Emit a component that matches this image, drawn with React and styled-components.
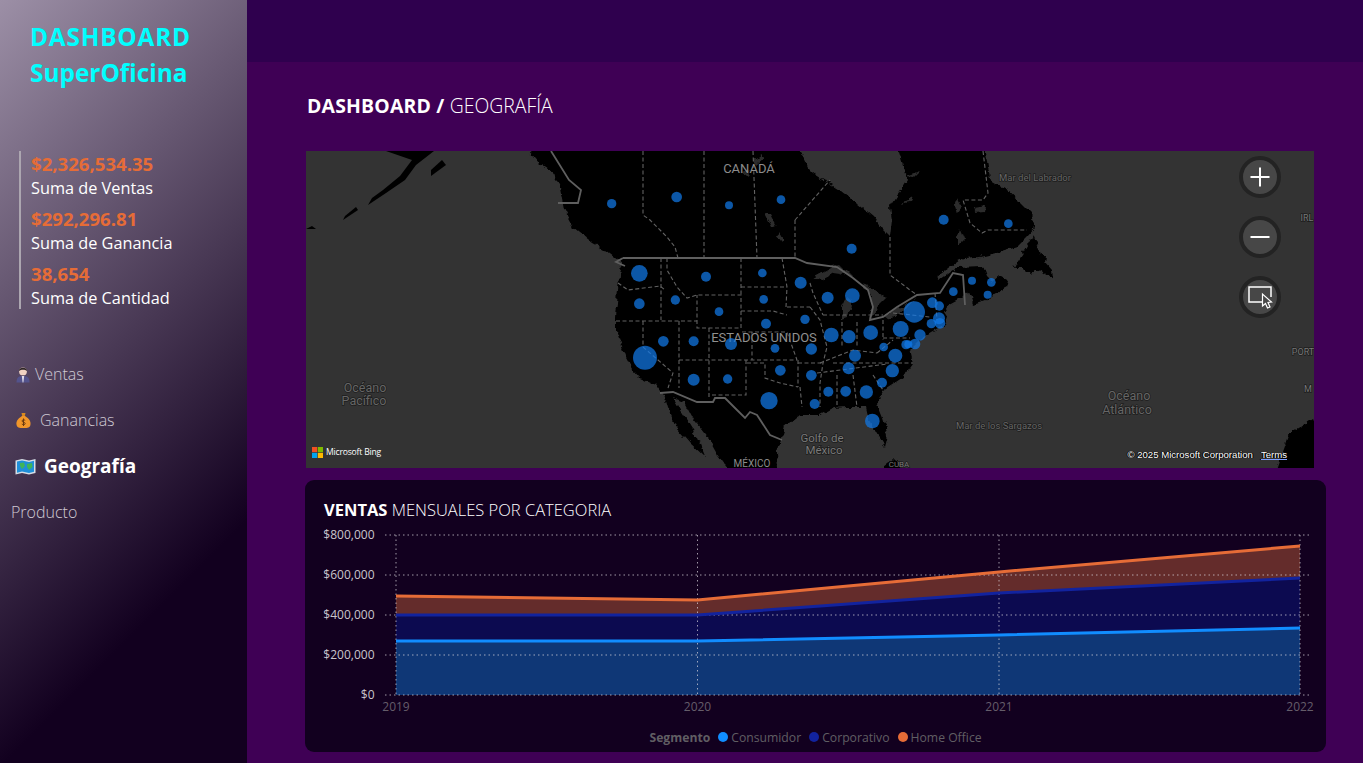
import React from "react";
import styled, { createGlobalStyle } from "styled-components";

const GlobalStyle = createGlobalStyle`
  html, body {
    margin: 0;
    padding: 0;
    background: #3f0055;
    font-family: "Open Sans", "Noto Sans", sans-serif;
  }
`;

const colors = {
  blue: "#118dff",
  navy: "#12239e",
  orange: "#e66c37",
};

const kpis = [
  { value: "$2,326,534.35", label: "Suma de Ventas" },
  { value: "$292,296.81", label: "Suma de Ganancia" },
  { value: "38,654", label: "Suma de Cantidad" },
];

// bubble positions read off the 3x crops: [x, y, r] in crop px
const bubbles = [
  [170, 141, 16], [327, 166, 12], [483, 149, 13], [695, 296, 15], [971, 209, 15], [1165, 221, 13],
  [58, 370, 25], [258, 380, 15], [427, 369, 13], [542, 398, 18], [623, 443, 18], [697, 437, 22],
  [937, 458, 16], [958, 468, 14], [883, 486, 32], [1000, 425, 13], [1056, 392, 12], [1114, 397, 13],
  [1103, 434, 12], [58, 461, 16], [166, 450, 14], [297, 485, 13], [431, 448, 13], [438, 521, 15],
  [555, 508, 14], [957, 505, 18], [934, 521, 14], [960, 520, 16], [842, 537, 24], [752, 548, 22],
  [634, 555, 22], [687, 560, 20], [900, 555, 17], [858, 584, 14], [885, 582, 16], [865, 583, 12],
  [130, 574, 16], [221, 574, 15], [333, 582, 18], [465, 595, 13], [574, 597, 17], [791, 591, 13],
  [705, 617, 18], [826, 617, 21], [75, 623, 36], [686, 655, 18], [817, 662, 20], [481, 661, 16],
  [574, 676, 16], [221, 689, 18], [323, 687, 14], [786, 698, 15], [625, 725, 15], [677, 724, 16],
  [739, 726, 20], [447, 752, 26], [584, 762, 15], [757, 813, 22], [-25, 161, 14],
];

const LAND =
  "M527 145 L529 151 L539 163 L552 172 L559 183 L564 210 L573 227 L584 236 L593 243 L606 250 L623 263 L619 275 L618 290 L616 317 L616 330 L626 357 L633 370 L640 378 L655 385 L660 392 L664 393 L668 407 L677 428 L690 443 L705 457 L697 437 L680 410 L673 398 L685 403 L693 418 L708 437 L717 453 L728 468 L733 476 L776 476 L778 468 L777 453 L782 437 L785 427 L800 415 L820 415 L833 408 L847 407 L866 407 L869 420 L878 436 L885 447 L888 435 L883 418 L877 403 L883 390 L903 377 L913 363 L910 350 L920 340 L931 333 L945 325 L948 318 L944 312 L949 304 L960 298 L969 293 L973 304 L985 300 L1007 288 L1009 280 L1000 275 L992 282 L987 277 L983 266 L957 267 L940 279 L937 277 L960 260 L980 257 L997 253 L1017 247 L1027 237 L1035 228 L1034 216 L1018 200 L1007 190 L990 180 L987 160 L983 145 Z";
const HUDSON = "M797 145 L807 167 L813 173 L840 190 L873 217 L881 228 L890 237 L892 220 L890 207 L907 180 L897 145 Z";
const ISLANDS = [
  "M1033 235 L1026 248 L1017 262 L1014 268 L1024 268 L1030 274 L1040 270 L1046 274 L1053 279 L1052 270 L1045 262 L1046 256 L1040 256 L1037 245 Z",
  "M1320 414 L1290 433 L1284 450 L1275 476 L1320 476 Z",
  "M873 476 L893 460 L910 476 Z",
];
// alaska sits at the map edge, kept out of the rough coast filter
const ALASKA = [
  "M386 151 L434 151 L416 165 L405 180 L386 193 L368 205 L372 198 L383 190 L400 176 L412 160 Z",
  "M431 176 L446 165 L442 160 L431 170 Z",
  "M343 220 L358 210 L356 207 L345 216 Z",
  "M306 229 L316 229 L312 226 Z",
];
const LAKES = [
  "M813 278 L833 267 L840 265 L853 278 L840 274 L833 273 L820 280 Z",
  "M842 307 L842 320 L848 318 L852 300 L847 296 Z",
  "M863 283 L887 297 L878 306 L870 320 L872 297 Z",
  "M884 316 L910 303 L917 297 L905 310 L888 319 Z",
  "M765 214 L770 214 L776 226 L772 228 Z",
  "M778 232 L784 240 L781 243 L776 236 Z",
  "M754 160 L762 154 L764 158 L757 164 Z",
  "M743 172 L750 170 L748 176 Z",
  "M955 205 L958 198 L962 206 L957 212 Z",
  "M974 208 L986 206 L985 211 L975 212 Z",
  "M905 176 L920 171 L914 177 Z",
  "M958 236 L960 230 L964 240 L958 246 Z",
  "M900 204 L912 198 L910 202 Z",
];
const BORDERS = [
  "M623 258 H795 L807 263 L837 267 L853 278 L868 290 L873 307 L870 320 L883 317 L897 307 L917 295 L940 293 L953 273 L963 275 L965 305",
  "M623 258 L616 262 L625 266",
  "M558 203 H578 L581 190 L569 180 L551 151",
  "M660 393 L673 392 L697 402 H713 L715 398 H725 L737 410 L745 418 L750 412 L757 415 L770 435 L782 440",
];
const STATES = [
  "M643 151 V215 L650 220 L667 237 L675 247 L678 258",
  "M704 151 V258", "M753 151 L757 258",
  "M795 220 V258", "M795 220 L830 180",
  "M890 237 V275 L910 290 L917 295",
  "M983 151 L988 193 L983 200 H963 L970 223 L982 233 L988 230 H1027",
  "M618 283 L628 290 L660 286 L665 290",
  "M616 321 H697", "M661 258 V320",
  "M667 258 V270 L677 287 L687 298 L697 295 H741 V328 H697 V295",
  "M741 258 V295", "M741 287 H787", "M782 258 L787 287 L786 307",
  "M741 311 H773 L787 315", "M787 307 H810", "M742 332 H787 L797 360",
  "M679 360 H797", "M709 328 V398", "M679 321 V388", "M746 360 V395 H710",
  "M752 332 V360", "M747 363 H765 V378 L780 383 L798 387", "M798 360 V387",
  "M800 387 L802 407", "M643 321 V347 L673 373 L668 388",
  "M810 307 L820 320 L827 347 L823 363 L820 383 L820 407", "M798 363 H823",
  "M817 373 L887 364", "M833 363 H913", "M837 375 V408", "M853 375 L857 407", "M873 375 L883 390",
  "M842 322 V347", "M857 322 V347", "M883 320 V340", "M883 338 H910",
  "M820 363 L853 350 L877 353", "M893 313 L930 317", "M935 293 L937 320",
  "M810 283 L813 293 L823 315", "M823 315 H883", "M877 353 L893 340",
];

const mapLabels = [
  { x: 749, y: 173, size: 13, text: "CANADÁ", tone: "#8c8c8c" },
  { x: 764, y: 342, size: 13, text: "ESTADOS UNIDOS", tone: "#909090" },
  { x: 365, y: 392, size: 12.5, text: "Océano", tone: "#666" },
  { x: 364, y: 405, size: 12.5, text: "Pacífico", tone: "#666" },
  { x: 822, y: 442, size: 11.5, text: "Golfo de", tone: "#7a7a7a" },
  { x: 824, y: 454, size: 11.5, text: "México", tone: "#7a7a7a" },
  { x: 752, y: 467, size: 10, text: "MÉXICO", tone: "#8c8c8c" },
  { x: 1035, y: 181, size: 9.5, text: "Mar del Labrador", tone: "#666" },
  { x: 999, y: 429, size: 9.5, text: "Mar de los Sargazos", tone: "#666" },
  { x: 1129, y: 400, size: 12.5, text: "Océano", tone: "#666" },
  { x: 1127, y: 414, size: 12.5, text: "Atlántico", tone: "#666" },
  { x: 1307, y: 221, size: 9, text: "IRL", tone: "#777" },
  { x: 1303, y: 355, size: 9, text: "PORT", tone: "#777" },
  { x: 1308, y: 392, size: 9, text: "M", tone: "#777" },
  { x: 899, y: 467, size: 8, text: "CUBA", tone: "#777" },
];

const Shell = styled.div`
  display: grid;
  grid-template-columns: 247px 1fr;
  width: 1363px;
  height: 763px;
  overflow: hidden;
  background: #3f0055;
`;

const Sidebar = styled.aside`
  display: flex;
  flex-direction: column;
  background: linear-gradient(135deg, #9c8fa6 0%, #12001f 76%);
  color: #fff;
`;

const Brand = styled.h1`
  margin: 0;
  padding: 19px 0 0 30px;
  font-size: 24.4px;
  line-height: 36px;
  font-weight: 700;
  color: #00ffff;
  span {
    letter-spacing: 0.8px;
  }
`;

const KpiList = styled.div`
  display: flex;
  flex-direction: column;
  margin: 60px 0 0 19px;
  padding-left: 10px;
  height: 158px;
  box-sizing: border-box;
  border-left: 2px solid #aca6b0;
`;

const Kpi = styled.div`
  flex: 0 0 55px;
  padding-top: 1px;
  box-sizing: border-box;
`;

const KpiValue = styled.div`
  font-size: 18.6px;
  line-height: 24px;
  font-weight: 700;
  color: ${colors.orange};
`;

const KpiLabel = styled.div`
  margin-top: 1px;
  font-size: 16.3px;
  line-height: 22px;
  color: #fff;
`;

const Nav = styled.nav`
  display: flex;
  flex-direction: column;
  margin-top: 42px;
`;

const NavItem = styled.div`
  display: flex;
  align-items: center;
  gap: ${(p) => p.$gap || 5}px;
  height: 46px;
  padding-left: ${(p) => p.$indent || 16}px;
  font-size: ${(p) => (p.$active ? 19 : 16)}px;
  font-weight: ${(p) => (p.$active ? 700 : 300)};
  color: ${(p) => (p.$active ? "#fff" : "#cfc9d3")};
  svg {
    flex: none;
  }
`;

const Main = styled.main`
  display: flex;
  flex-direction: column;
`;

const TopStrip = styled.div`
  height: 62px;
  background: #2f004e;
`;

const Content = styled.div`
  display: flex;
  flex-direction: column;
  align-items: flex-start;
  padding: 30px 0 0 58px;
`;

const Crumb = styled.h2`
  margin: 0 0 31px 2px;
  font-size: 19.4px;
  line-height: 28px;
  font-weight: 300;
  color: #fff;
  b {
    font-weight: 700;
    letter-spacing: 0.2px;
  }
`;

const MapPanel = styled.section`
  position: relative;
  width: 1008px;
  height: 317px;
  margin: 0 0 12px 1px;
  background: #333;
  overflow: hidden;
  svg.base {
    display: block;
  }
`;

const MapLabel = styled.text`
  font-family: Roboto, sans-serif;
  text-anchor: middle;
  paint-order: stroke;
  stroke: rgba(0, 0, 0, 0.45);
  stroke-width: 1.5px;
`;

const ZoomControls = styled.div`
  position: absolute;
  top: 5px;
  right: 33px;
  display: flex;
  flex-direction: column;
  gap: 18px;
`;

const ZoomButton = styled.div`
  display: flex;
  align-items: center;
  justify-content: center;
  width: 42px;
  height: 42px;
  box-sizing: border-box;
  border-radius: 50%;
  border: 4px solid #232323;
  background: #474747;
`;

const BingMark = styled.div`
  position: absolute;
  left: 6px;
  bottom: 10px;
  display: flex;
  align-items: center;
  gap: 3px;
  font-family: "Open Sans", sans-serif;
  font-size: 8.6px;
  letter-spacing: -0.2px;
  color: #fff;
`;

const Attribution = styled.div`
  position: absolute;
  right: 27px;
  bottom: 7px;
  display: flex;
  gap: 8px;
  font-family: "Liberation Sans", sans-serif;
  font-size: 9.6px;
  line-height: 12px;
  color: #fff;
  text-shadow: 0 0 1px #000, 1px 0 0 #000, -1px 0 0 #000;
  u {
    text-decoration-color: #7f9fff;
  }
`;

const ChartCard = styled.section`
  width: 1021px;
  height: 272px;
  background: #12001f;
  border-radius: 9px;
`;

const ChartTitle = styled.h3`
  margin: 0;
  padding: 19px 0 0 19px;
  height: 45px;
  box-sizing: border-box;
  font-size: 16.5px;
  line-height: 22px;
  font-weight: 300;
  color: #fff;
  b {
    font-weight: 700;
  }
`;

const ChartSvg = styled.svg`
  display: block;
  font-family: "Open Sans", sans-serif;
  font-size: 12px;
`;

const Legend = styled.div`
  display: flex;
  align-items: center;
  justify-content: center;
  gap: 8px;
  height: 20px;
  margin-top: 2px;
  font-size: 12.2px;
  color: #605e63;
  b {
    font-weight: 700;
  }
`;

const LegendItem = styled.span`
  display: flex;
  align-items: center;
  gap: 3px;
  &::before {
    content: "";
    width: 10px;
    height: 10px;
    border-radius: 50%;
    background: ${(p) => p.$color};
  }
`;

function PersonIcon() {
  return (
    <svg width="14" height="17" viewBox="0 0 14 17">
      <path d="M0.5 16.5 C0.5 11 3 10 7 10 C11 10 13.5 11 13.5 16.5 Z" fill="#53538c" />
      <path d="M5.8 10 H8.2 L7.4 16.5 H6.6 Z" fill="#e2deea" />
      <circle cx="7" cy="5.4" r="3.9" fill="#f0d2c2" />
      <path d="M3 5 C2.6 0.6 11.4 0.6 11 5 C9 3.4 5 3.4 3 5 Z" fill="#2e2628" />
    </svg>
  );
}

function BagIcon() {
  return (
    <svg width="15" height="17" viewBox="0 0 15 17">
      <path d="M5.5 1 H9.5 L8.8 4 H6.2 Z" fill="#d98a1f" />
      <path d="M6 4 C1 7 0 10 0.6 13 C1 15.6 3 16 7.5 16 C12 16 14 15.6 14.4 13 C15 10 14 7 9 4 Z" fill="#f0962a" />
      <path d="M7.5 6.5 V14 M9.2 8.4 C8 7.4 6 7.8 6 9 C6 10.6 9.2 9.8 9.2 11.6 C9.2 12.8 7 13 5.8 12" stroke="#6b3a10" strokeWidth="1" fill="none" />
    </svg>
  );
}

function MapIcon() {
  return (
    <svg width="21" height="17" viewBox="0 0 21 17">
      <path d="M0.5 2.5 L7 1 L14 2.5 L20.5 1 V15 L14 16.5 L7 15 L0.5 16.5 Z" fill="#d5dde6" />
      <path d="M2 3.6 L7 2.5 L14 4 L19 2.8 V13.8 L14 15 L7 13.5 L2 14.8 Z" fill="#1f8fd8" />
      <path d="M5 5 L9 4.5 L10 8 L7 11 L5 8 Z M12 6 L17 5 L17.5 9 L14 12 L12 9 Z" fill="#3fb45a" />
    </svg>
  );
}

function CursorIcon() {
  return (
    <svg width="26" height="24" viewBox="0 0 26 24" fill="none">
      <path d="M19 17 H2 V2 H24 V12" stroke="#fff" strokeWidth="1.5" />
      <path d="M15.5 9 V21 L18.5 18.5 L20.5 23 L23 22 L21 17.5 L24.5 17 Z" fill="#484848" stroke="#fff" strokeWidth="1.2" />
    </svg>
  );
}

function MapDrawing() {
  return (
    <svg className="base" width="1008" height="317" viewBox="306 151 1008 317">
      <defs>
        {/* roughens the coast so it reads like map tiles and not a polygon */}
        <filter id="coast" filterUnits="userSpaceOnUse" x="296" y="140" width="1030" height="340" colorInterpolationFilters="sRGB">
          <feTurbulence type="fractalNoise" baseFrequency="0.13" numOctaves="3" seed="4" result="noise" />
          <feDisplacementMap in="SourceGraphic" in2="noise" scale="7" xChannelSelector="R" yChannelSelector="G" />
        </filter>
      </defs>
      {ALASKA.map((d) => (
        <path key={d} d={d} fill="#000" />
      ))}
      <g filter="url(#coast)">
        <path d={LAND} fill="#000" />
        {ISLANDS.map((d) => (
          <path key={d} d={d} fill="#000" />
        ))}
        <path d={HUDSON} fill="#333" />
        {LAKES.map((d) => (
          <path key={d} d={d} fill="#2c2c2c" />
        ))}
      </g>
      <g fill="none" stroke="#626262" strokeWidth="1.1" strokeDasharray="4 2.5">
        {STATES.map((d) => (
          <path key={d} d={d} />
        ))}
      </g>
      <g fill="none" stroke="#5f5f5f" strokeWidth="1.8">
        {BORDERS.map((d) => (
          <path key={d} d={d} />
        ))}
      </g>
      {mapLabels.map((l) => (
        <MapLabel key={l.text + l.x} x={l.x} y={l.y} fontSize={l.size} fill={l.tone}>
          {l.text}
        </MapLabel>
      ))}
      {bubbles.map(([x, y, r]) => (
        <circle key={`${x}-${y}`} cx={620 + x / 3} cy={150 + y / 3} r={r / 3} fill="#1078e8" fillOpacity="0.72" />
      ))}
    </svg>
  );
}

// chart coordinates are page pixels so they compare directly with the screenshot
const years = [
  { label: "2019", x: 396 },
  { label: "2020", x: 697.5 },
  { label: "2021", x: 999 },
  { label: "2022", x: 1300 },
];
const ticks = [
  { label: "$800,000", y: 535 },
  { label: "$600,000", y: 575 },
  { label: "$400,000", y: 615 },
  { label: "$200,000", y: 655 },
  { label: "$0", y: 695 },
];
const consumer = [641, 641, 635, 628];
const corporate = [615, 615, 593, 578];
const home = [596, 600, 572, 546];

const line = (ys) => ys.map((y, i) => `${i ? "L" : "M"}${years[i].x} ${y}`).join(" ");
const band = (top, bottom) =>
  `${line(top)} ${[...bottom].reverse().map((y, i) => `L${years[3 - i].x} ${y}`).join(" ")} Z`;

function SalesChart() {
  const floor = [695, 695, 695, 695];
  return (
    <ChartSvg width="1021" height="200" viewBox="305 525 1021 200">
      <path d={band(consumer, floor)} fill="#0f3776" />
      <path d={band(corporate, consumer)} fill="#0c0a50" />
      <path d={band(home, corporate)} fill="#642c2b" />
      <g stroke="#d8d4dc" strokeWidth="1" strokeDasharray="1.5 3" strokeOpacity="0.72">
        {ticks.map((t) => (
          <line key={t.y} x1="385" x2="1311" y1={t.y} y2={t.y} />
        ))}
        {years.map((t) => (
          <line key={t.x} x1={t.x} x2={t.x} y1="535" y2="695" />
        ))}
      </g>
      <path d={line(consumer)} fill="none" stroke={colors.blue} strokeWidth="3" />
      <path d={line(corporate)} fill="none" stroke={colors.navy} strokeWidth="3" />
      <path d={line(home)} fill="none" stroke={colors.orange} strokeWidth="3" />
      {ticks.map((t) => (
        <text key={t.y} x="374.5" y={t.y + 4} textAnchor="end" fill="#c9c5cc">
          {t.label}
        </text>
      ))}
      {years.map((t) => (
        <text key={t.x} x={t.x} y="711" textAnchor="middle" fill="#655d6a">
          {t.label}
        </text>
      ))}
    </ChartSvg>
  );
}

export default function App() {
  return (
    <Shell>
      <GlobalStyle />
      <Sidebar>
        <Brand>
          <span>DASHBOARD</span>
          <br />
          SuperOficina
        </Brand>
        <KpiList>
          {kpis.map((k) => (
            <Kpi key={k.label}>
              <KpiValue>{k.value}</KpiValue>
              <KpiLabel>{k.label}</KpiLabel>
            </Kpi>
          ))}
        </KpiList>
        <Nav>
          <NavItem $gap={5}>
            <PersonIcon /> Ventas
          </NavItem>
          <NavItem $gap={9}>
            <BagIcon /> Ganancias
          </NavItem>
          <NavItem $active $indent={15} $gap={8}>
            <MapIcon /> Geografía
          </NavItem>
          <NavItem $indent={11}>Producto</NavItem>
        </Nav>
      </Sidebar>
      <Main>
        <TopStrip />
        <Content>
          <Crumb>
            <b>DASHBOARD / </b>GEOGRAFÍA
          </Crumb>
          <MapPanel>
            <MapDrawing />
            <ZoomControls>
              <ZoomButton>
                <svg width="20" height="20" viewBox="0 0 20 20" stroke="#fff" strokeWidth="2">
                  <path d="M0.5 10 H19.5 M10 0.5 V19.5" />
                </svg>
              </ZoomButton>
              <ZoomButton>
                <svg width="20" height="20" viewBox="0 0 20 20" stroke="#fff" strokeWidth="2">
                  <path d="M0.5 10 H19.5" />
                </svg>
              </ZoomButton>
              <ZoomButton>
                <CursorIcon />
              </ZoomButton>
            </ZoomControls>
            <BingMark>
              <svg width="11" height="11" viewBox="0 0 11 11">
                <rect width="5.2" height="5.2" fill="#f25022" />
                <rect x="5.8" width="5.2" height="5.2" fill="#7fba00" />
                <rect y="5.8" width="5.2" height="5.2" fill="#00a4ef" />
                <rect x="5.8" y="5.8" width="5.2" height="5.2" fill="#ffb900" />
              </svg>
              Microsoft Bing
            </BingMark>
            <Attribution>
              <span>© 2025 Microsoft Corporation</span>
              <u>Terms</u>
            </Attribution>
          </MapPanel>
          <ChartCard>
            <ChartTitle>
              <b>VENTAS</b> MENSUALES POR CATEGORIA
            </ChartTitle>
            <SalesChart />
            <Legend>
              <b>Segmento</b>
              <LegendItem $color={colors.blue}>Consumidor</LegendItem>
              <LegendItem $color={colors.navy}>Corporativo</LegendItem>
              <LegendItem $color={colors.orange}>Home Office</LegendItem>
            </Legend>
          </ChartCard>
        </Content>
      </Main>
    </Shell>
  );
}
